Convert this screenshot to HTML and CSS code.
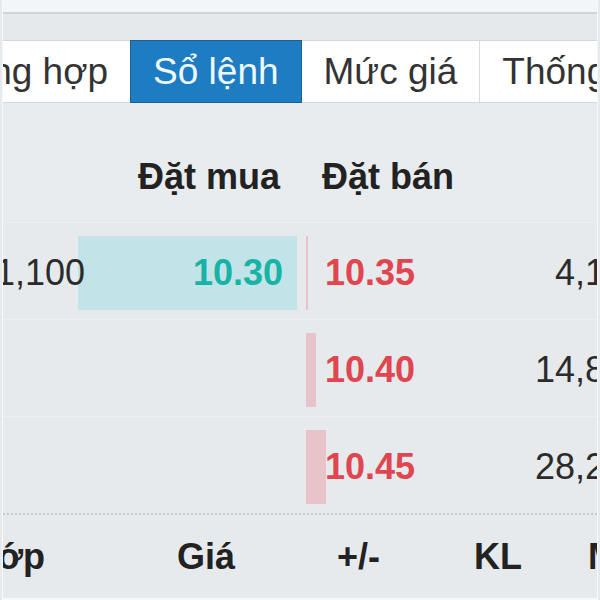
FILE: index.html
```html
<!DOCTYPE html>
<html lang="vi">

<head>
    <meta charset="UTF-8">
    <meta name="viewport" content="width=device-width, initial-scale=1.0">
    <title>Sổ lệnh</title>
    <link rel="stylesheet" href="styles.css">
</head>

<body>
    <div class="page">
        <div class="top-strip"></div>
        <div class="top-band"></div>

        <!-- Thanh tab -->
        <div class="tabs">
            <div class="tab tab-first">Tổng hợp</div>
            <div class="tab active">Sổ lệnh</div>
            <div class="tab">Mức giá</div>
            <div class="tab">Thống kê</div>
        </div>

        <!-- Sổ lệnh -->
        <div class="book">
            <div class="book-head">
                <span></span>
                <span class="head-buy">Đặt mua</span>
                <span class="head-sell">Đặt bán</span>
                <span></span>
            </div>

            <div class="book-row">
                <span class="vol vol-buy">1,100</span>
                <span class="price price-buy"><i class="bar bar-buy" style="width: 219px"></i><b>10.30</b></span>
                <span class="price price-sell"><i class="bar bar-sell" style="width: 2px"></i><b>10.35</b></span>
                <span class="vol vol-sell">4,100</span>
            </div>

            <div class="book-row">
                <span class="vol vol-buy"></span>
                <span class="price price-buy"></span>
                <span class="price price-sell"><i class="bar bar-sell" style="width: 10px"></i><b>10.40</b></span>
                <span class="vol vol-sell">14,800</span>
            </div>

            <div class="book-row">
                <span class="vol vol-buy"></span>
                <span class="price price-buy"></span>
                <span class="price price-sell"><i class="bar bar-sell" style="width: 20px"></i><b>10.45</b></span>
                <span class="vol vol-sell">28,200</span>
            </div>
        </div>

        <!-- Khớp lệnh -->
        <div class="match-head">
            <span class="col-time">Khớp</span>
            <span class="col-price">Giá</span>
            <span class="col-change">+/-</span>
            <span class="col-vol">KL</span>
            <span class="col-side">M/B</span>
        </div>
    </div>
</body>

</html>
```

FILE: styles.css
```css
/* Estilos gerais */
body,
html {
    margin: 0;
    padding: 0;
    background-color: #e6eaed;
    font-family: 'Liberation Sans', Arial, sans-serif;
    overflow: hidden;
}

.page {
    margin: 0 2px;
    height: 600px;
    border-left: 1px solid #f6f8f9;
    border-right: 1px solid #f6f8f9;
    overflow: hidden;
}

/* Faixa superior */
.top-strip {
    height: 12px;
    background-color: #f3f5f7;
    border-bottom: 2px solid #cfd4d8;
}

.top-band {
    height: 26px;
    background-color: #e5e9ec;
}

/* Tabs */
.tabs {
    display: flex;
    height: 61px;
    background-color: #fff;
    border-top: 1px solid #d3d8dc;
    border-bottom: 1px solid #d3d8dc;
    white-space: nowrap;
}

.tab {
    flex: none;
    display: flex;
    align-items: center;
    padding: 0 22px;
    font-size: 37px;
    color: #333;
    border-right: 1px solid #d8dcdf;
}

.tab-first {
    margin-left: -77px;
    border-right: none;
}

.tab.active {
    background-color: #1e7dc2;
    color: #eef8ff;
    border: 1px solid #1b5f93;
    margin-top: -1px;
    margin-bottom: -1px;
}

/* Livro de ofertas */
.book-head,
.book-row {
    display: grid;
    grid-template-columns: 82px 221px 154px 185px;
}

.book-head {
    height: 119px;
    align-items: end;
    box-sizing: border-box;
    font-size: 36px;
    font-weight: bold;
    color: #222;
    background-color: #e8ecef;
}

.book-head span {
    line-height: 40px;
    padding-bottom: 25px;
}

.head-buy {
    text-align: right;
    padding-right: 26px;
}

.head-sell {
    padding-left: 16px;
}

.book-row {
    height: 97px;
    box-sizing: border-box;
    border-top: 1px solid #edf0f2;
    font-size: 36px;
    align-items: center;
}

.vol {
    position: relative;
    z-index: 1;
    display: flex;
    justify-content: flex-end;
    color: #2b2b2b;
    white-space: nowrap;
    padding-top: 4px;
}

.price {
    position: relative;
    align-self: stretch;
    display: flex;
    align-items: center;
    padding-top: 4px;
    font-weight: bold;
}

.price b {
    position: relative;
}

.price-buy {
    justify-content: flex-end;
    padding-right: 23px;
    color: #17b3a4;
}

.price-sell {
    padding-left: 19px;
    color: #e0464f;
}

.bar {
    position: absolute;
    top: 13px;
    bottom: 9px;
}

.bar-buy {
    right: 9px;
    background-color: #c2e3e7;
}

.bar-sell {
    left: 0;
    background-color: #e8c3c9;
}

/* Cabeçalho de khớp lệnh */
.match-head {
    display: flex;
    height: 83px;
    align-items: center;
    margin-left: -63px;
    border-top: 2px dotted #c6ccd1;
    border-bottom: 2px solid #f6f8f9;
    font-size: 36px;
    font-weight: bold;
    color: #222;
    white-space: nowrap;
}

.match-head span {
    flex: none;
    text-align: right;
}

.col-time {
    width: 105px;
}

.col-price {
    width: 190px;
}

.col-change {
    width: 145px;
}

.col-vol {
    width: 142px;
}

.col-side {
    width: 132px;
}
```
